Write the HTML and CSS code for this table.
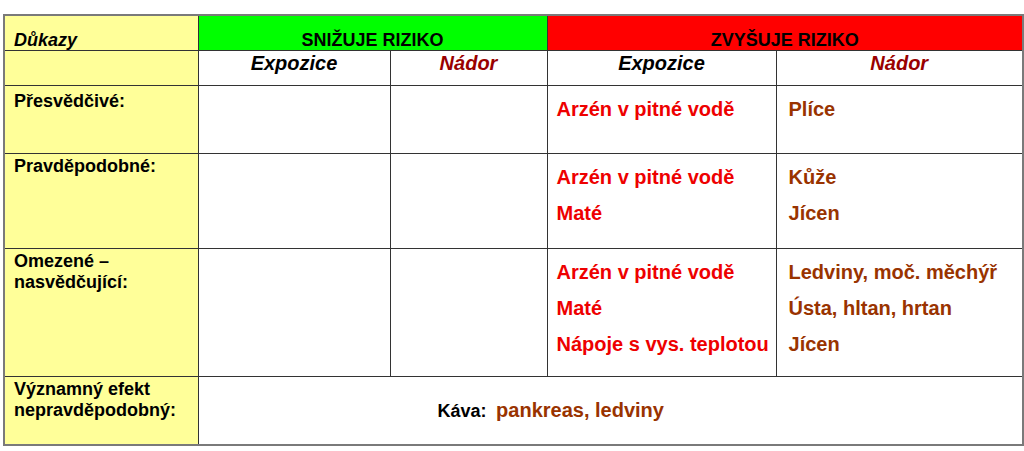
FILE: index.html
```html
<!DOCTYPE html>
<html lang="cs">
<head>
<meta charset="utf-8">
<link rel="stylesheet" href="styles.css">
</head>
<body>
<table class="grid">
  <colgroup>
    <col class="c1"><col class="c2"><col class="c3"><col class="c4"><col class="c5">
  </colgroup>
  <tr class="r-head">
    <td class="label lbl-head">Důkazy</td>
    <td class="green" colspan="2">SNIŽUJE RIZIKO</td>
    <td class="red" colspan="2">ZVYŠUJE RIZIKO</td>
  </tr>
  <tr class="r-sub">
    <td class="label"></td>
    <td class="sub">Expozice</td>
    <td class="sub sub-n">Nádor</td>
    <td class="sub">Expozice</td>
    <td class="sub sub-n">Nádor</td>
  </tr>
  <tr class="r1">
    <td class="label lbl1">Přesvědčivé:</td>
    <td></td><td></td>
    <td class="exp"><p>Arzén v pitné vodě</p></td>
    <td class="tum"><p>Plíce</p></td>
  </tr>
  <tr class="r2">
    <td class="label">Pravděpodobné:</td>
    <td></td><td></td>
    <td class="exp"><p>Arzén v pitné vodě</p><p>Maté</p></td>
    <td class="tum"><p>Kůže</p><p>Jícen</p></td>
  </tr>
  <tr class="r3">
    <td class="label lbl3">Omezené –<br>nasvědčující:</td>
    <td></td><td></td>
    <td class="exp"><p>Arzén v pitné vodě</p><p>Maté</p><p>Nápoje s vys. teplotou</p></td>
    <td class="tum"><p>Ledviny, moč. měchýř</p><p>Ústa, hltan, hrtan</p><p>Jícen</p></td>
  </tr>
  <tr class="r4">
    <td class="label">Významný efekt<br>nepravděpodobný:</td>
    <td class="coffee" colspan="4"><span class="k">Káva:</span> <span class="kv">pankreas, ledviny</span></td>
  </tr>
</table>
</body>
</html>
```
FILE: styles.css
```css
html, body {
  margin: 0;
  padding: 0;
  background: #ffffff;
}
body {
  padding: 14px 0 0 3px;
  font-family: "Liberation Sans", Arial, sans-serif;
  font-weight: bold;
}
.grid {
  border-collapse: collapse;
  table-layout: fixed;
  width: 1019px;
  border: 2px solid #7a7a7a;
}
.c1 { width: 194px; }
.c2 { width: 192px; }
.c3 { width: 157px; }
.c4 { width: 229px; }
.c5 { width: 247px; }
.grid td {
  border: 1.5px solid #333333;
  padding: 0;
  vertical-align: top;
  color: #000;
}
.grid .label {
  background: #ffff99;
  font-size: 18px;
  line-height: 21px;
  padding: 2px 0 0 9px;
}
.r-head { height: 35px; }
.r-sub { height: 35px; }
.r1 { height: 68px; }
.r2 { height: 95px; }
.r3 { height: 128px; }
.r4 { height: 69px; }
.grid .lbl-head {
  font-style: italic;
  vertical-align: bottom;
  line-height: 19px;
  padding: 0 0 0 9px;
}
.grid .lbl1 { padding-top: 5px; }
.grid .green, .grid .red {
  text-align: center;
  vertical-align: bottom;
  font-size: 18px;
  line-height: 19px;
  padding-bottom: 0;
}
.grid .green { background: #00ff00; }
.grid .red { background: #ff0000; }
.grid .sub {
  font-style: italic;
  text-align: center;
  font-size: 20px;
  line-height: 23px;
  padding-top: 1px;
}
.grid .sub-n { color: #990000; }
.grid .exp, .grid .tum {
  font-size: 20px;
  line-height: 36px;
  padding-top: 5px;
}
.grid .exp { color: #ee0000; padding-left: 9px; }
.grid .tum { color: #993300; padding-left: 12px; }
.exp p, .tum p { margin: 0; white-space: nowrap; }
.grid .coffee {
  vertical-align: middle;
  padding-left: 239px;
  font-size: 20px;
}
.coffee .k { font-size: 18px; color: #000; margin-right: 4px; }
.coffee .kv { color: #993300; }
```
